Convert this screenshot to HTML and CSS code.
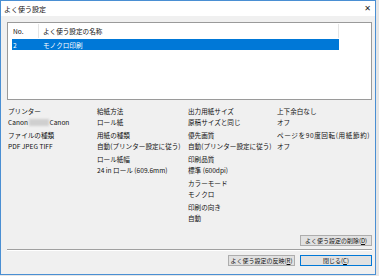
FILE: index.html
```html
<!DOCTYPE html>
<html lang="ja">
<head>
  <meta charset="UTF-8" />
  <title>よく使う設定</title>
  <link rel="stylesheet" href="styles.css">
</head>
<body>
  <div class="dialog">
    <div class="titlebar">
      <span class="title">よく使う設定</span>
      <span class="close-x">✕</span>
    </div>
    <div class="content">
      <div class="list">
        <div class="list-head">
          <div class="col-no">No.</div>
          <div class="col-name">よく使う設定の名称</div>
        </div>
        <div class="list-row selected">
          <div class="col-no">2</div>
          <div class="col-name">モノクロ印刷</div>
        </div>
      </div>

      <div class="info">
        <div class="info-col c1">
          <div class="item"><div>プリンター</div><div>Canon <span class="blur"></span>Canon</div></div>
          <div class="item"><div>ファイルの種類</div><div>PDF JPEG TIFF</div></div>
        </div>
        <div class="info-col c2">
          <div class="item"><div>給紙方法</div><div>ロール紙</div></div>
          <div class="item"><div>用紙の種類</div><div>自動(プリンター設定に従う)</div></div>
          <div class="item"><div>ロール紙幅</div><div>24 in ロール (609.6mm)</div></div>
        </div>
        <div class="info-col c3">
          <div class="item"><div>出力用紙サイズ</div><div>原稿サイズと同じ</div></div>
          <div class="item"><div>優先画質</div><div>自動(プリンター設定に従う)</div></div>
          <div class="item"><div>印刷品質</div><div>標準 (600dpi)</div></div>
          <div class="item"><div>カラーモード</div><div>モノクロ</div></div>
          <div class="item"><div>印刷の向き</div><div>自動</div></div>
        </div>
        <div class="info-col c4">
          <div class="item"><div>上下余白なし</div><div>オフ</div></div>
          <div class="item"><div class="wide">ページを90度回転(用紙節約)</div><div>オフ</div></div>
        </div>
      </div>

      <div class="delete-row">
        <button type="button" class="btn">よく使う設定の削除(<u>D</u>)</button>
      </div>
      <div class="separator"></div>
      <div class="footer">
        <button type="button" class="btn btn-apply">よく使う設定の反映(<u>R</u>)</button>
        <button type="button" class="btn btn-default">閉じる(<u>C</u>)</button>
      </div>
    </div>
  </div>
</body>
</html>
```

FILE: styles.css
```css
* {
  margin: 0;
  padding: 0;
  box-sizing: border-box;
}
body {
  font-family: "Noto Sans CJK JP", "Noto Sans", sans-serif;
  font-size: 6.6px;
  color: #111;
  background-color: #e6e6e6;
  width: 379px;
  height: 276px;
  overflow: hidden;
}
.dialog {
  width: 376px;
  height: 275px;
  border: 1px solid #4a8fd3;
  background-color: #f0f0f0;
  display: flex;
  flex-direction: column;
}
.titlebar {
  height: 15px;
  flex-shrink: 0;
  background-color: #fff;
  display: flex;
  align-items: center;
  justify-content: space-between;
  padding: 0 4px 0 3px;
}
.title {
  font-size: 7px;
}
.close-x {
  font-family: "DejaVu Sans", sans-serif;
  font-size: 8px;
  color: #222;
}
.content {
  flex: 1;
  display: flex;
  flex-direction: column;
  padding: 0 3px 0 6px;
}
.list {
  margin-top: 6px;
  height: 78px;
  flex-shrink: 0;
  background-color: #fff;
  border: 1px solid #9a9a9a;
  padding: 1px 32px 0 4px;
}
.list-head,
.list-row {
  display: flex;
  align-items: center;
}
.list-head {
  height: 14px;
}
.list-head .col-no {
  border-right: 1px solid #e5e5e5;
  align-self: stretch;
  display: flex;
  align-items: center;
}
.list-head::after {
  content: "";
  margin-left: auto;
  align-self: stretch;
  border-right: 1px solid #e5e5e5;
}
.list-row {
  height: 11px;
  margin-top: 1px;
}
.col-no {
  width: 27px;
  padding-left: 1px;
}
.col-name {
  padding-left: 4px;
}
.selected {
  background-color: #0078d7;
  color: #fff;
}
.info {
  display: flex;
  padding: 6px 0 0 1px;
  height: 124px;
  flex-shrink: 0;
}
.info-col {
  display: flex;
  flex-direction: column;
  gap: 2px;
}
.c1 { width: 89px; }
.c2 { width: 91px; }
.c3 { width: 89px; }
.item {
  line-height: 11px;
  white-space: nowrap;
}
.wide {
  letter-spacing: 0.6px;
}
.blur {
  display: inline-block;
  width: 20px;
  height: 7px;
  vertical-align: -1px;
  background-color: #cfcfcf;
  filter: blur(1.2px);
}
.delete-row {
  display: flex;
  justify-content: flex-end;
  margin-top: 11px;
}
.btn {
  font-family: inherit;
  font-size: 6px;
  color: #111;
  height: 11px;
  width: 72px;
  line-height: 9px;
  background-color: #e1e1e1;
  border: 1px solid #adadad;
  white-space: nowrap;
}
.separator {
  margin-top: 3px;
  height: 2px;
  border-top: 1px solid #a0a0a0;
  border-bottom: 1px solid #fff;
}
.footer {
  display: flex;
  justify-content: flex-end;
  gap: 5px;
  margin-top: 4px;
}
.btn-apply {
  width: 67px;
}
.btn-default {
  border-color: #0078d7;
}
```
